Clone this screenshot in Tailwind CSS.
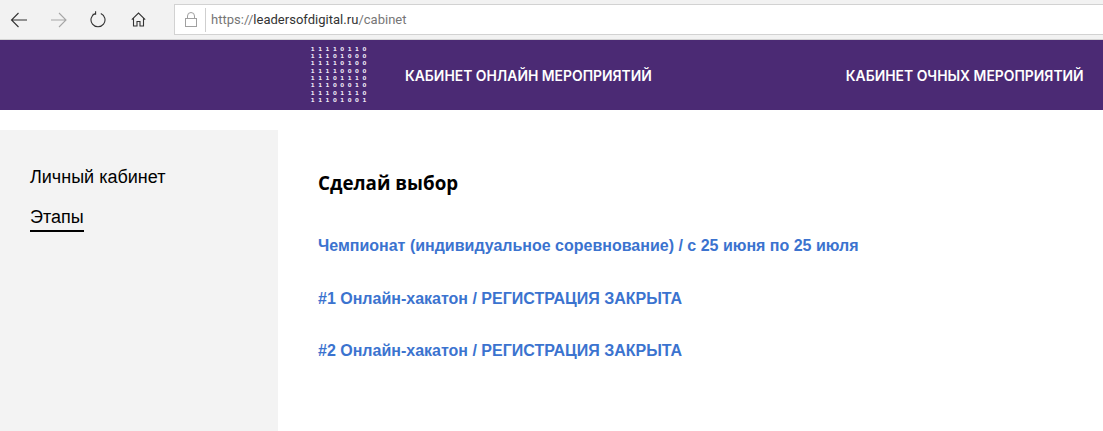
<!DOCTYPE html>
<html lang="ru">
<head>
    <meta charset="UTF-8">
    <meta name="viewport" content="width=device-width, initial-scale=1.0">
    <title>Кабинет</title>
    <script src="https://cdn.jsdelivr.net/npm/@tailwindcss/browser@4"></script>
</head>
<body class="bg-white h-[431px] w-[1103px] overflow-hidden flex flex-col font-['Liberation_Sans',sans-serif]">

    <!-- Browser toolbar -->
    <div class="h-10 bg-[#f2f2f2] border-b border-[#d4d4d4] flex items-center shrink-0">
        <div class="w-[174px] flex items-center text-[#333]">
            <svg class="ml-[10px]" width="18" height="16" viewBox="0 0 18 16" fill="none" stroke="#333" stroke-width="1.1"><path d="M17 8H1.5M8.5 1L1.5 8l7 7"/></svg>
            <svg class="ml-[22px]" width="18" height="16" viewBox="0 0 18 16" fill="none" stroke="#a6a6a6" stroke-width="1.1"><path d="M1 8h15M9 1l7 7-7 7"/></svg>
            <svg class="ml-[22px]" width="16" height="17" viewBox="0 0 16 17" fill="none" stroke="#333" stroke-width="1.1"><path d="M5.2 2.4A7 7 0 1 0 10.8 2.4M5.6 0.2v3h-3"/></svg>
            <svg class="ml-[25px]" width="15" height="15" viewBox="0 0 15 15" fill="none" stroke="#333" stroke-width="1.1"><path d="M0.8 7.6L7.5 1l6.7 6.6M2.5 6.2V14h3.5V9.5h3V14h3.5V6.2"/></svg>
        </div>
        <div class="flex-1 h-[31px] bg-white border border-[#d2d2d2] flex items-center -mr-px">
            <svg class="ml-[10px]" width="12" height="15" viewBox="0 0 12 15" fill="none" stroke="#a0a0a0" stroke-width="1"><rect x="0.5" y="6.5" width="11" height="8"/><path d="M2.5 6.5V4a3.5 3.5 0 0 1 7 0v2.5"/></svg>
            <div class="w-px h-[24px] bg-[#cfcfcf] ml-[8px]"></div>
            <p class="ml-[5px] text-[13px] tracking-[0.02px] text-[#767676] font-['Roboto',sans-serif]">https://<span class="text-[#333]">leadersofdigital.ru</span>/cabinet</p>
        </div>
    </div>

    <!-- Site header -->
    <div class="h-[70px] bg-[#4b2a74] flex items-center shrink-0 pl-[309px] text-white">
        <div class="w-[59px] grid grid-cols-8 text-[5.5px] leading-[7.3px] font-bold text-center font-['DejaVu_Sans',sans-serif] text-[#eee8f5]">
            <span>1</span><span>1</span><span>1</span><span>1</span><span>0</span><span>1</span><span>1</span><span>0</span>
            <span>1</span><span>1</span><span>1</span><span>0</span><span>1</span><span>0</span><span>0</span><span>0</span>
            <span>1</span><span>1</span><span>1</span><span>1</span><span>0</span><span>1</span><span>0</span><span>0</span>
            <span>1</span><span>1</span><span>1</span><span>1</span><span>0</span><span>0</span><span>0</span><span>0</span>
            <span>1</span><span>1</span><span>1</span><span>0</span><span>1</span><span>1</span><span>1</span><span>0</span>
            <span>1</span><span>1</span><span>1</span><span>0</span><span>0</span><span>0</span><span>1</span><span>0</span>
            <span>1</span><span>1</span><span>1</span><span>0</span><span>1</span><span>1</span><span>1</span><span>0</span>
            <span>1</span><span>1</span><span>1</span><span>0</span><span>1</span><span>0</span><span>0</span><span>1</span>
        </div>
        <a class="ml-[37px] mt-[3px] text-[13.9px] font-semibold font-['Inter',sans-serif] whitespace-nowrap">КАБИНЕТ ОНЛАЙН МЕРОПРИЯТИЙ</a>
        <a class="ml-[194px] mt-[3px] text-[13.9px] font-semibold font-['Inter',sans-serif] whitespace-nowrap">КАБИНЕТ ОЧНЫХ МЕРОПРИЯТИЙ</a>
    </div>

    <!-- Content -->
    <div class="flex flex-1 mt-5 min-h-0">
        <div class="w-[278px] bg-[#f3f3f3] pl-[30px] pt-[36px] shrink-0">
            <p class="text-[18px] leading-[22px] text-black">Личный кабинет</p>
            <p class="mt-[18px] text-[18px] leading-[22px] text-black border-b-2 border-black w-fit pb-[2px]">Этапы</p>
        </div>
        <div class="pl-10 pt-[40px]">
            <h2 class="text-[18.75px] leading-[26px] font-bold text-black font-['Open_Sans',sans-serif]">Сделай выбор</h2>
            <div class="mt-[41px] flex flex-col gap-[34.5px] text-[#3b73cf] font-bold text-[16px] leading-[18px]">
                <a>Чемпионат (индивидуальное соревнование) / с 25 июня по 25 июля</a>
                <a>#1 Онлайн-хакатон / РЕГИСТРАЦИЯ ЗАКРЫТА</a>
                <a>#2 Онлайн-хакатон / РЕГИСТРАЦИЯ ЗАКРЫТА</a>
            </div>
        </div>
    </div>

</body>
</html>
